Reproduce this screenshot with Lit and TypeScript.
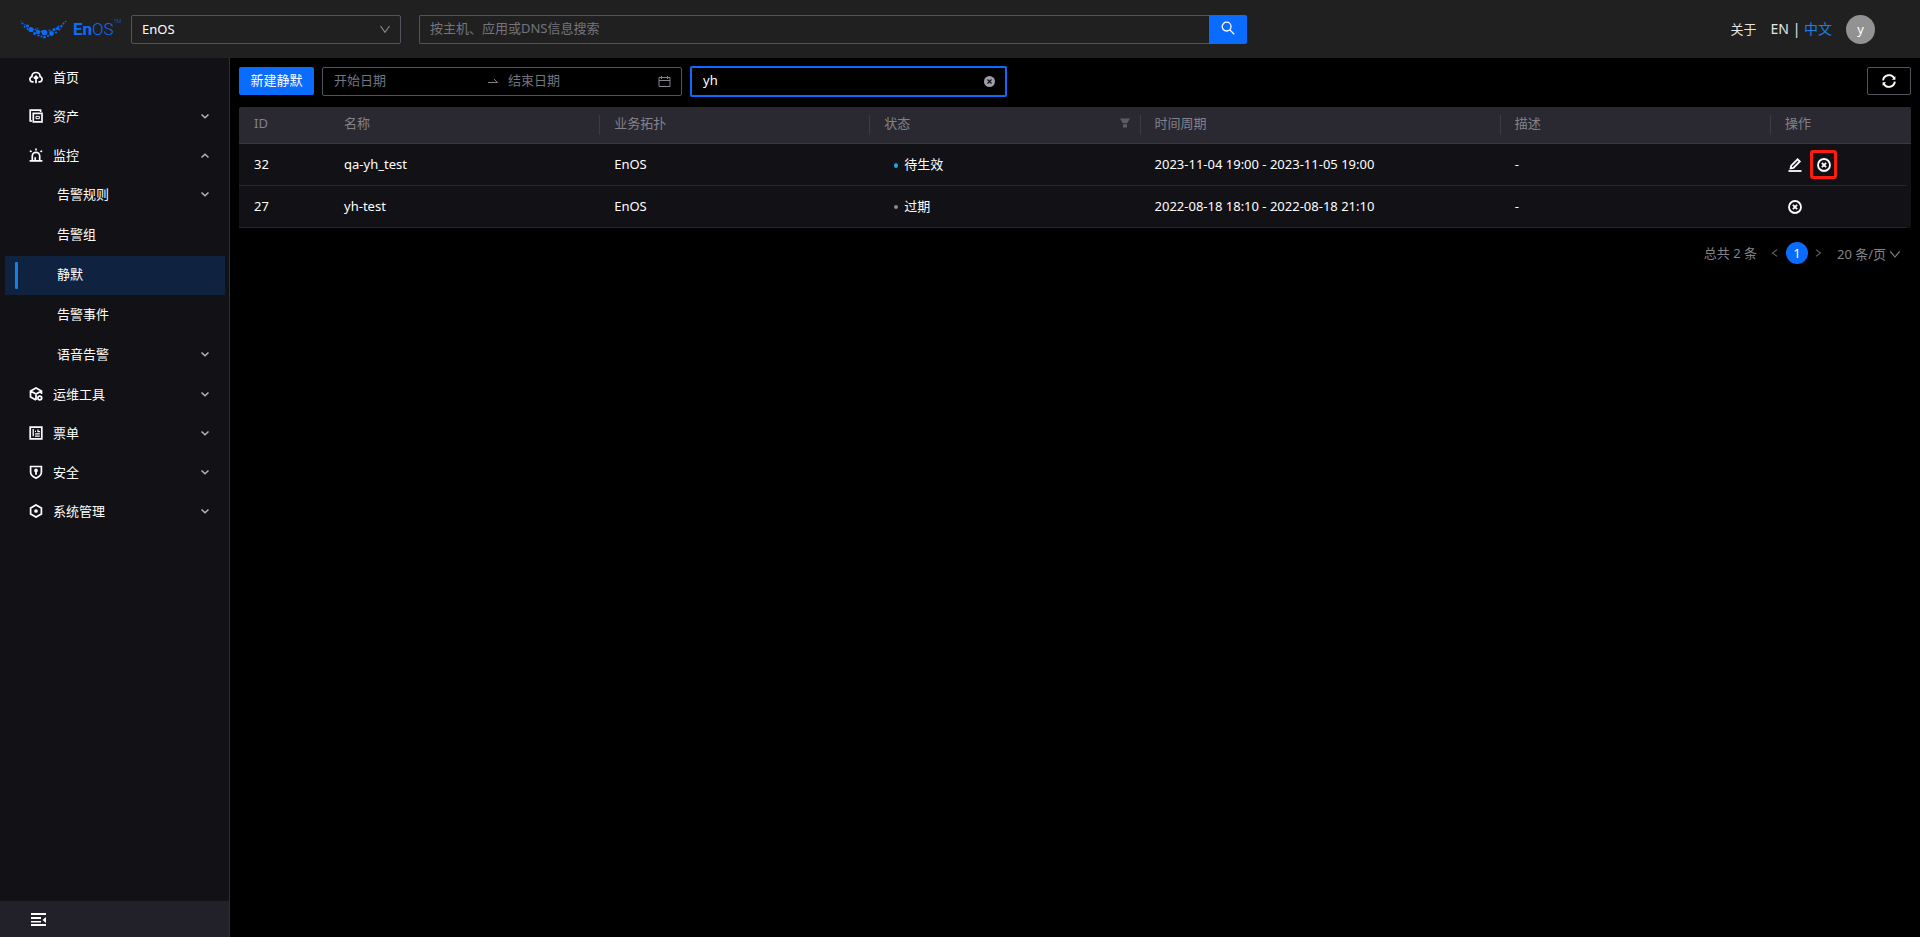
import { LitElement, html, css, svg, nothing } from "lit";
import { customElement, state } from "lit/decorators.js";
import { classMap } from "lit/directives/class-map.js";

const stroke = (body: unknown, size = 14, width = 1.4) => html`
  <svg width=${size} height=${size} viewBox="0 0 14 14" fill="none" stroke="currentColor"
    stroke-width=${width} aria-hidden="true">${body}</svg>`;

const icons: Record<string, unknown> = {
  home: svg`<path d="M4.6 11.9H3.7A2.7 2.7 0 0 1 2.9 6.6 4.1 4.1 0 0 1 11.1 6.6 2.7 2.7 0 0 1 10.3 11.9H9.4M7 13.3V6.2M4.8 8.3 7 6.1l2.2 2.2"/>`,
  asset: svg`<path d="M11.6 3V1.2H1.2V12H3M4.3 4.3H13V12.8H4.3z"/><path d="M7 7.4H10.4V9.7H7z" stroke-width="1"/>`,
  alarm: svg`<path d="M0.6 12.8H13.4M3.3 12.5V8a3.7 3.7 0 0 1 7.4 0V12.5M7 0.6V2.4M1 2.6 2.5 4M13 2.6 11.5 4M6.2 12V9.2"/>`,
  tools: svg`<path d="M12.5 7V4L7 1 1.5 4v6L7 13M1.5 4 7 7l5.5-3M7 7v6"/><circle cx="10.8" cy="11" r="1.9"/>`,
  ticket: svg`<path d="M1.2 1.2H12.8V12.8H1.2z"/><path d="M4.2 3V10.3M6 5.4H7M9 3.6V5.6H11M6 7.8H10.8M6 10.2H10.8" stroke-width="1.3"/>`,
  shield: svg`<path d="M1.6 1.5H12.4V7.3C12.4 10 10 12 7 13.1 4 12 1.6 10 1.6 7.3z"/><path d="M7 6V9.8" stroke-width="1.8"/><circle cx="7" cy="5.4" r="1" fill="currentColor"/>`,
  system: svg`<path d="M7 0.9 12.4 4V10L7 13.1 1.6 10V4z"/><circle cx="7" cy="7" r="1" fill="currentColor"/>`,
};

interface NavEntry { label: string; icon?: string; arrow?: "up" | "down"; active?: boolean; sub?: NavEntry[] }

const NAV: NavEntry[] = [
  { label: "首页", icon: "home" },
  { label: "资产", icon: "asset", arrow: "down" },
  {
    label: "监控", icon: "alarm", arrow: "up", sub: [
      { label: "告警规则", arrow: "down" },
      { label: "告警组" },
      { label: "静默", active: true },
      { label: "告警事件" },
      { label: "语音告警", arrow: "down" },
    ],
  },
  { label: "运维工具", icon: "tools", arrow: "down" },
  { label: "票单", icon: "ticket", arrow: "down" },
  { label: "安全", icon: "shield", arrow: "down" },
  { label: "系统管理", icon: "system", arrow: "down" },
];

interface Silence { id: number; name: string; topology: string; status: string; pending: boolean; period: string; note: string }

const ROWS: Silence[] = [
  { id: 32, name: "qa-yh_test", topology: "EnOS", status: "待生效", pending: true, period: "2023-11-04 19:00 - 2023-11-05 19:00", note: "-" },
  { id: 27, name: "yh-test", topology: "EnOS", status: "过期", pending: false, period: "2022-08-18 18:10 - 2022-08-18 21:10", note: "-" },
];

const base = css`
  :host, * { box-sizing: border-box; }
  svg { display: block; flex: none; }
  button, input, select { font: inherit; color: inherit; margin: 0; padding: 0; border: 0; background: none; outline: none; border-radius: 0; }
  button, select { cursor: pointer; }
  select { appearance: none; }
  a { color: inherit; text-decoration: none; }
  ul { list-style: none; margin: 0; padding: 0; }
  input::placeholder { color: #74747e; opacity: 1; }
`;

@customElement("top-bar")
export class TopBar extends LitElement {
  static styles = [base, css`
    :host { display: flex; align-items: center; height: 58px; padding: 0 45px 0 20px; background: #202020; color: #fff; }
    .logo { display: flex; align-items: center; width: 111px; color: #0a6cff; }
    .word { margin-left: 6px; font: 300 17px/20px Roboto, sans-serif; }
    .word b { font-weight: 700; }
    .word sup { font-size: 5px; line-height: 5px; vertical-align: top; }
    .pick { display: grid; align-items: center; width: 270px; }
    .pick > * { grid-area: 1 / 1; }
    .pick svg { justify-self: end; margin-right: 9px; color: #8b8b94; pointer-events: none; }
    .pick select { height: 29px; padding: 0 10px; border: 1px solid #53535d; border-radius: 2px; }
    .find { display: flex; flex: 0 1 828px; margin: 0 auto 0 18px; }
    .find input { flex: 1; min-width: 0; height: 29px; padding: 0 10px 2px; border: 1px solid #53535d; border-right: 0; border-radius: 2px 0 0 2px; }
    .find button { display: grid; place-items: center; width: 38px; height: 29px; padding-bottom: 2px; background: #0a6cff; border-radius: 0 2px 2px 0; }
    .about { margin-right: 14px; }
    .lang { font-size: 14px; }
    .lang a { color: #1a7fe8; }
    .avatar { display: grid; place-items: center; width: 29px; height: 29px; margin-left: 14px; border-radius: 50%; background: #929292; }
    .about, .lang { color: #e6e6e6; }
  `];

  render() {
    const dots = [
      [1, 1, .6], [2.5, 3.5, 1], [5, 5, .8], [4.5, 7, .9], [7.5, 6, 1.6], [7.5, 9, .9], [11, 9.5, 2.6], [14.5, 13.5, 1.4], [15.5, 9.5, 1],
      [18, 12, 2.2], [18.5, 15.5, 1.1], [17.5, 8.5, .7], [21.5, 16.5, 1], [24.5, 12.5, 2.8], [21.5, 11.5, .9], [24.5, 17.3, 1.3], [28, 16, 1.1],
      [29.5, 10.5, .9], [31.5, 13.5, 2.4], [34, 9.5, 1.6], [36, 12.5, 1.1], [37.5, 8.5, 1.6], [39.5, 10, .8], [38.5, 6.5, .9], [41.5, 6, 1.2], [41, 8, .6],
      [43.5, 3.5, 1], [45.5, 1.5, .8],
    ];
    return html`
      <a class="logo" href="#" aria-label="EnOS">
        <svg width="47" height="19" viewBox="0 0 47 19" fill="currentColor" aria-hidden="true">
          ${dots.map(([x, y, r]) => svg`<circle cx=${x} cy=${y} r=${r} />`)}
        </svg>
        <span class="word"><b>En</b>OS<sup>TM</sup></span>
      </a>
      <div class="pick">
        <select aria-label="应用"><option>EnOS</option></select>
        ${stroke(svg`<path d="M2.5 4 7 10.3 11.5 4"/>`, 14, 1.1)}
      </div>
      <form class="find" @submit=${(e: Event) => e.preventDefault()}>
        <input type="text" aria-label="搜索" placeholder="按主机、应用或DNS信息搜索" />
        <button aria-label="搜索">${stroke(svg`<circle cx="5.6" cy="5.6" r="4.4"/><path d="M8.9 8.9 13.2 13.2"/>`, 14, 1.3)}</button>
      </form>
      <a class="about" href="#">关于</a>
      <span class="lang">EN | <a href="#">中文</a></span>
      <button class="avatar" aria-label="用户">y</button>`;
  }
}

@customElement("side-nav")
export class SideNav extends LitElement {
  static styles = [base, css`
    :host { display: flex; flex-direction: column; justify-content: space-between; width: 230px; border-right: 1px solid #303034; background: #111116; color: #fff; }
    .item { display: flex; align-items: center; height: 39px; margin: 0 4px 0 5px; padding: 0 13px 2px 24px; }
    .item span { flex: 1; margin-left: 10px; }
    .item .arrow { color: #b4b4ba; }
    .sub .item { margin-top: 1px; padding: 0 13px 0 10px; }
    .sub .item span { margin-left: 39px; }
    .sub .item span, .sub .arrow { padding-bottom: 4px; }
    .bar { width: 3px; height: 27px; border-radius: 1px; }
    .sub .item.on { background: #0f2341; }
    .on .bar { background: #1a7de0; }
    .fold { display: flex; align-items: center; width: 100%; height: 36px; padding-left: 31px; background: #222129; }
  `];

  private entry(e: NavEntry, sub = false): unknown {
    return html`<li>
      <a class=${classMap({ item: true, on: !!e.active })} href="#">
        ${sub ? html`<i class="bar"></i>` : stroke(icons[e.icon!], 14, 1.7)}
        <span>${e.label}</span>
        ${e.arrow ? html`<i class="arrow">${stroke(e.arrow === "down"
          ? svg`<path d="M3.5 5.5 7 8.8 10.5 5.5"/>` : svg`<path d="M3.5 9.5 7 6.2 10.5 9.5"/>`, 14, 1.5)}</i>` : nothing}
      </a>
      ${e.sub ? html`<ul class="sub">${e.sub.map((s) => this.entry(s, true))}</ul>` : nothing}
    </li>`;
  }

  render() {
    return html`
      <nav><ul>${NAV.map((e) => this.entry(e))}</ul></nav>
      <button class="fold" aria-label="收起菜单">
        <svg width="15" height="14" viewBox="0 0 15 14" fill="currentColor" aria-hidden="true">
          <path d="M0 1H15V3H0zM0 5H10V7H0zM0 9H10V10.5H0zM0 12H15V14H0zM15 5V11L11.5 8z"/>
        </svg>
      </button>`;
  }
}

@customElement("silence-page")
export class SilencePage extends LitElement {
  static styles = [base, css`
    :host { display: block; min-width: 0; padding: 8px 9px; color: #fff; background: #000; }
    .tools { display: flex; align-items: flex-start; height: 31px; gap: 8px; }
    .primary, .range, .refresh { margin-top: 1px; }
    .primary { width: 75px; height: 28px; padding-bottom: 3px; border-radius: 2px; background: #0a6cff; }
    .range { display: flex; align-items: center; width: 360px; height: 29px; padding: 0 10px 3px 11px; border: 1px solid #53535d; border-radius: 2px; color: #83838c; }
    .range input { flex: 1; min-width: 0; }
    .range .end { flex: 0 1 150px; }
    .range .to { margin-right: 10px; }
    .range .cal { margin-top: 2px; }
    .filter { display: flex; align-items: center; width: 317px; height: 31px; padding: 0 10px 0 11px; border: 2px solid #0a6cff; border-radius: 2px; }
    .filter input { flex: 1; min-width: 0; padding-bottom: 3px; }
    .filter button { color: #9d9dab; }
    .refresh { display: grid; place-items: center; width: 44px; height: 28px; margin-left: auto; border: 1px solid #53535d; border-radius: 2px; }
    .card { margin-top: 10px; padding-right: 5px; border-radius: 2px; background: linear-gradient(#2a2830 36px, #3a3940 36px, #3a3940 37px, #111116 37px); }
    table { width: 100%; table-layout: fixed; border-collapse: separate; border-spacing: 0; text-align: left; }
    .w90 { width: 90px; } .w136 { width: 136px; } .w270 { width: 270px; } .w360 { width: 360px; }
    th { height: 37px; padding: 0 10px 4px 15px; border-bottom: 1px solid #3a3940; color: #83828c; font-weight: 400; }
    th.line { background: linear-gradient(#3c3b43, #3c3b43) 0 8px / 1px 20px no-repeat; }
    td { height: 42px; padding: 0 15px 1px; border-bottom: 1px solid #29282e; }
    .head, .state, .acts { display: flex; align-items: center; }
    .head { justify-content: space-between; color: inherit; }
    .head button { color: #5d5c66; }
    .state { gap: 6px; padding-left: 10px; }
    .dot { width: 4px; height: 4px; margin-top: 2px; border-radius: 50%; background: #8a8a8a; }
    .dot.pending { height: 5px; background: #18a8e6; }
    .acts { gap: 15px; padding: 2px 0 0 3px; }
    .acts button { position: relative; }
    .marked::after { content: ""; position: absolute; inset: -8px -6px -7px -7px; border: 3px solid #fb1d10; border-radius: 3px; }
    .pages { display: flex; align-items: center; justify-content: flex-end; margin-top: 13px; padding-right: 10px; color: #83838c; }
    .pages .step { margin: 0 5px 0 12px; color: #62626b; }
    .pages .next { margin: 0 13px 0 4px; }
    .now { width: 22px; height: 22px; border-radius: 50%; background: #0a6cff; color: #fff; }
    .size { display: flex; align-items: center; padding-top: 3px; }
    .size svg { margin-left: 2px; pointer-events: none; }
  `];

  @state() private query = "yh";

  private cancel(marked: boolean) {
    return html`<button class=${classMap({ marked })} aria-label="取消">
      ${stroke(svg`<circle cx="7" cy="7" r="6"/><path d="M4.9 4.9 9.1 9.1M9.1 4.9 4.9 9.1"/>`, 14, 1.8)}
    </button>`;
  }

  render() {
    return html`
      <div class="tools">
        <button class="primary">新建静默</button>
        <div class="range">
          <input type="text" aria-label="开始日期" placeholder="开始日期" />
          <svg class="to" width="10" height="10" viewBox="0 0 10 10" fill="none" stroke="currentColor" aria-hidden="true"><path d="M0 7.5H9.5L6 4"/></svg>
          <input class="end" type="text" aria-label="结束日期" placeholder="结束日期" />
          <svg class="cal" width="13" height="13" viewBox="0 0 13 13" fill="none" stroke="currentColor" aria-hidden="true"><path d="M1 2.5H12V11.5H1zM1 5.5H12M3.5 1V4M9.5 1V4"/></svg>
        </div>
        <div class="filter">
          <input type="text" aria-label="筛选" .value=${this.query} @input=${(e: Event) => (this.query = (e.target as HTMLInputElement).value)} />
          <button aria-label="清除" @click=${() => (this.query = "")}>
            <svg width="11" height="11" viewBox="0 0 11 11" aria-hidden="true"><circle cx="5.5" cy="5.5" r="5.5" fill="currentColor"/><path d="M3.5 3.5 7.5 7.5M7.5 3.5 3.5 7.5" stroke="#111" stroke-width="1.2"/></svg>
          </button>
        </div>
        <button class="refresh" aria-label="刷新">
          ${stroke(svg`<path d="M1.1 6.3A6 6 0 0 1 12.3 4.3M12.9 7.7A6 6 0 0 1 1.7 9.7"/><path d="M13.4 2.3V5.8H9.9zM0.6 11.7V8.2H4.1z" fill="currentColor" stroke="none"/>`, 14, 1.9)}
        </button>
      </div>
      <div class="card">
        <table>
          <colgroup><col class="w90" /><col class="w270" /><col class="w270" /><col class="w270" /><col class="w360" /><col class="w270" /><col class="w136" /></colgroup>
          <thead><tr>
            <th>ID</th><th>名称</th><th class="line">业务拓扑</th>
            <th class="line"><div class="head">状态
              <button aria-label="筛选状态"><svg width="10" height="10" viewBox="0 0 10 10" fill="currentColor" aria-hidden="true"><path d="M0 0.5H10L7.2 5.3H2.8zM3 6.3H7V9.5H3z"/></svg></button>
            </div></th>
            <th class="line">时间周期</th><th class="line">描述</th><th class="line">操作</th>
          </tr></thead>
          <tbody>${ROWS.map((r) => html`<tr>
            <td>${r.id}</td><td>${r.name}</td><td>${r.topology}</td>
            <td><div class="state"><i class=${classMap({ dot: true, pending: r.pending })}></i>${r.status}</div></td>
            <td>${r.period}</td><td>${r.note}</td>
            <td><div class="acts">
              ${r.pending ? html`<button aria-label="编辑">${stroke(svg`<path d="M0.5 13H13.5"/><path d="M2.6 10.3 3.2 7.7 9.6 1.3 11.8 3.5 5.4 9.9z"/>`, 14, 1.8)}</button>` : nothing}
              ${this.cancel(r.pending)}
            </div></td>
          </tr>`)}</tbody>
        </table>
      </div>
      <div class="pages">
        <span>总共 2 条</span>
        <button class="step" aria-label="上一页">${stroke(svg`<path d="M9.5 3 4 7 9.5 11"/>`, 12, 1.2)}</button>
        <button class="now" aria-current="page">1</button>
        <button class="step next" aria-label="下一页">${stroke(svg`<path d="M4.5 3 10 7 4.5 11"/>`, 12, 1.2)}</button>
        <label class="size">
          <select aria-label="每页条数"><option>20 条/页</option></select>
          ${stroke(svg`<path d="M1.5 4 7 10.5 12.5 4"/>`, 12, 1.3)}
        </label>
      </div>`;
  }
}

@customElement("app-root")
export class AppRoot extends LitElement {
  static styles = css`
    :host { display: grid; grid-template: auto 1fr / auto minmax(0, 1fr); min-height: 100vh; background: #000; font: 13px/20px "Noto Sans", "Noto Sans CJK SC", sans-serif; }
    top-bar { grid-column: 1 / -1; }
  `;

  render() {
    return html`<top-bar></top-bar><side-nav></side-nav><silence-page></silence-page>`;
  }
}
